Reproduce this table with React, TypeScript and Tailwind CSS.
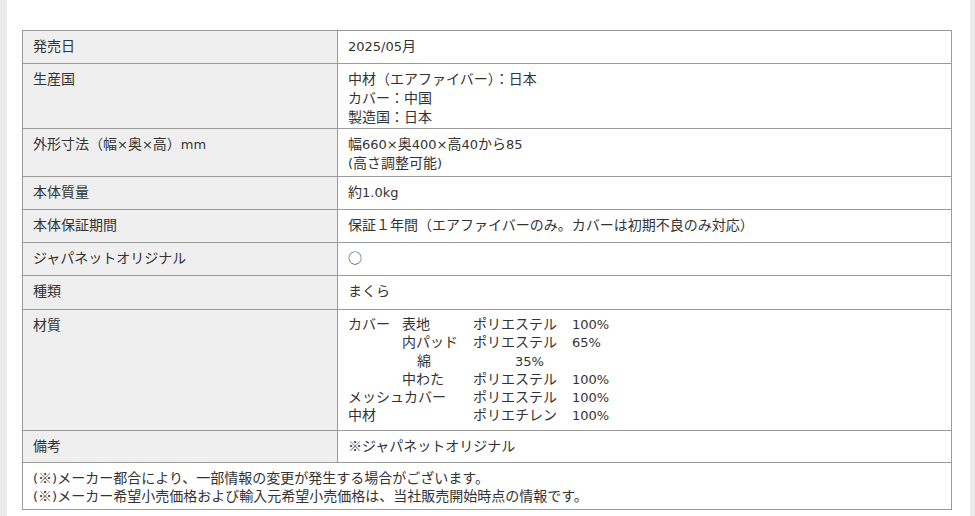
import React from 'react';

// Latin runs are set a size smaller in a Verdana-like face, the way the page's font pairs them
const Mixed: React.FC<{ text: string }> = ({ text }) => (
  <>
    {text.split(/([\x20-\x7e×]+)/).map((part, i) =>
      /^[\x20-\x7e×]+$/.test(part) ? (
        <span key={i} className="text-[13px] leading-none [font-family:'DejaVu_Sans',sans-serif]">
          {part}
        </span>
      ) : (
        <React.Fragment key={i}>{part}</React.Fragment>
      )
    )}
  </>
);

const Lines: React.FC<{ lines: string[] }> = ({ lines }) => (
  <>
    {lines.map((l, i) => (
      <React.Fragment key={i}>
        {i > 0 && <br />}
        <Mixed text={l} />
      </React.Fragment>
    ))}
  </>
);

const rows: { label: string; value: string[]; h: string; lead?: string }[] = [
  { label: '発売日', value: ['2025/05月'], h: 'h-[33px]' },
  {
    label: '生産国',
    value: ['中材（エアファイバー）：日本', 'カバー：中国', '製造国：日本'],
    h: 'h-[65px]',
    lead: 'leading-[19px]',
  },
  {
    label: '外形寸法（幅×奥×高）mm',
    value: ['幅660×奥400×高40から85', '(高さ調整可能)'],
    h: 'h-[48px]',
    lead: 'leading-[18.5px]',
  },
  { label: '本体質量', value: ['約1.0kg'], h: 'h-[33px]' },
  { label: '本体保証期間', value: ['保証１年間（エアファイバーのみ。カバーは初期不良のみ対応）'], h: 'h-[33px]' },
  { label: 'ジャパネットオリジナル', value: ['○'], h: 'h-[33px]' },
  { label: '種類', value: ['まくら'], h: 'h-[34px]' },
];

const materials = [
  ['カバー', '表地', 'ポリエステル', '100%'],
  ['', '内パッド', 'ポリエステル', '65%'],
  ['', '綿', '35%', ''],
  ['', '中わた', 'ポリエステル', '100%'],
  ['メッシュカバー', '', 'ポリエステル', '100%'],
  ['中材', '', 'ポリエチレン', '100%'],
];

const MaterialTable: React.FC = () => (
  <div className="leading-[18.3px]">
    {materials.map((m, i) => {
      if (m[0] === 'メッシュカバー') {
        return (
          <div key={i} className="grid h-[18.3px] grid-cols-[125px_99px_auto]">
            <span>{m[0]}</span>
            <span>{m[2]}</span>
            <span><Mixed text={m[3]} /></span>
          </div>
        );
      }
      if (m[1] === '綿') {
        return (
          <div key={i} className="grid h-[18.3px] grid-cols-[54px_71px_99px_auto]">
            <span />
            <span className="pl-[15px]">{m[1]}</span>
            <span className="pl-[42px]"><Mixed text={m[2]} /></span>
            <span />
          </div>
        );
      }
      return (
        <div key={i} className="grid h-[18.3px] grid-cols-[54px_71px_99px_auto]">
          <span>{m[0]}</span>
          <span>{m[1]}</span>
          <span>{m[2]}</span>
          <span><Mixed text={m[3]} /></span>
        </div>
      );
    })}
  </div>
);

const App: React.FC = () => {
  const labelCls =
    'border border-[#9a9a9a] bg-[#efefef] px-[10px] pt-[5px] pb-0 align-top text-left font-normal whitespace-nowrap';
  const valueCls = 'border border-[#9a9a9a] bg-white px-[10px] pt-[5px] pb-0 align-top whitespace-nowrap';

  return (
    <div
      className="flex min-h-[516px] bg-white text-[14px] leading-[19px] text-[#333]"
      style={{ fontFamily: '"Noto Sans CJK JP", "DejaVu Sans", sans-serif' }}
    >
      <div className="w-[7px] shrink-0 bg-[#ebebeb]" />
      <main className="flex-1 pl-[15px] pt-[30px]">
        <table className="w-[930px] table-fixed border-collapse">
          <colgroup>
            <col className="w-[315px]" />
            <col />
          </colgroup>
          <tbody>
            {rows.map((r) => (
              <tr key={r.label}>
                <th className={`${labelCls} ${r.h}`}>
                  <Mixed text={r.label} />
                </th>
                <td className={`${valueCls} ${r.h} ${r.lead ?? ''}`}>
                  <Lines lines={r.value} />
                </td>
              </tr>
            ))}
            <tr>
              <th className={`${labelCls} h-[121px]`}>材質</th>
              <td className={`${valueCls} h-[121px] !pt-[4px]`}>
                <MaterialTable />
              </td>
            </tr>
            <tr>
              <th className={`${labelCls} h-[32px]`}>備考</th>
              <td className={`${valueCls} h-[32px]`}>※ジャパネットオリジナル</td>
            </tr>
            <tr>
              <td
                colSpan={2}
                className="h-[47px] border border-[#9a9a9a] px-[10px] pt-[5px] pb-0 align-top leading-[18px]"
              >
                <Lines
                  lines={[
                    '(※)メーカー都合により、一部情報の変更が発生する場合がございます。',
                    '(※)メーカー希望小売価格および輸入元希望小売価格は、当社販売開始時点の情報です。',
                  ]}
                />
              </td>
            </tr>
          </tbody>
        </table>
      </main>
      <div className="w-[5px] shrink-0 bg-[#ebebeb]" />
    </div>
  );
};

export default App;
